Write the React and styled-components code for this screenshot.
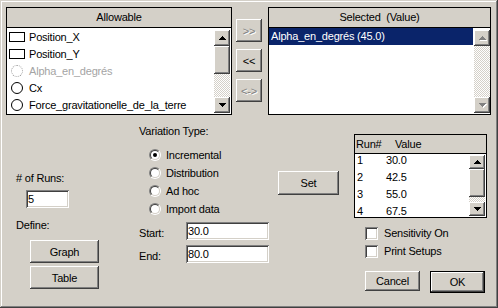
import React from 'react';
import styled, { createGlobalStyle, css } from 'styled-components';

const FACE = '#d4d0c8';
const SHADOW = '#808080';
const DARK = '#404040';
const HILITE = '#ffffff';
const NAVY = '#0a246a';

const GlobalStyle = createGlobalStyle`
  html, body {
    margin: 0;
    padding: 0;
    background: ${FACE};
  }
  body {
    font-family: "Liberation Sans", Arial, sans-serif;
    font-size: 11px;
    letter-spacing: -0.2px;
    color: #000;
  }
`;

const raised = css`
  box-shadow:
    inset -1px -1px ${DARK},
    inset 1px 1px ${HILITE},
    inset -2px -2px ${SHADOW},
    inset 2px 2px ${FACE};
`;

const sunken = css`
  box-shadow:
    inset 1px 1px ${SHADOW},
    inset -1px -1px ${HILITE},
    inset 2px 2px ${DARK},
    inset -2px -2px ${FACE};
`;

const Dialog = styled.div`
  box-sizing: border-box;
  width: 498px;
  height: 308px;
  padding: 7px 0 0 6px;
  background: ${FACE};
  box-shadow:
    inset -1px -1px ${DARK},
    inset 1px 1px ${FACE},
    inset -2px -2px ${SHADOW},
    inset 2px 2px ${HILITE};
  display: flex;
  flex-direction: column;
`;

const TopRow = styled.div`
  display: flex;
  align-items: flex-start;
`;

const Panel = styled.div`
  box-sizing: border-box;
  flex: none;
  display: flex;
  flex-direction: column;
  width: ${({ $w }) => $w}px;
  height: ${({ $h }) => $h}px;
  margin-left: ${({ $ml }) => $ml || 0}px;
  margin-top: ${({ $mt }) => $mt || 0}px;
  border: 1px solid #000;
  background: ${FACE};
`;

const PanelHeader = styled.div`
  flex: none;
  display: flex;
  justify-content: ${({ $left }) => ($left ? 'flex-start' : 'center')};
  height: ${({ $h }) => $h}px;
  line-height: ${({ $h }) => $h}px;
  border-bottom: 1px solid #000;
  padding-left: ${({ $left }) => ($left ? '1px' : 0)};
  white-space: pre;
`;

const PanelBody = styled.div`
  flex: 1;
  min-height: 0;
  display: flex;
  background: #fff;
`;

const Items = styled.div`
  flex: 1;
  min-width: 0;
  overflow: hidden;
`;

const ItemRow = styled.div`
  display: flex;
  align-items: center;
  gap: 4px;
  height: 17px;
  padding-left: 2px;
  white-space: nowrap;
  color: ${({ $disabled }) => ($disabled ? '#a4a4a4' : '#000')};
`;

const SelectedRow = styled.div`
  height: 17px;
  line-height: 17px;
  margin-right: 1px;
  padding-left: 2px;
  white-space: nowrap;
  background: ${({ $active }) => ($active ? NAVY : 'transparent')};
  color: ${({ $active }) => ($active ? '#fff' : '#000')};
`;

const IconSlot = styled.span`
  flex: none;
  width: 16px;
  height: 12px;
  display: flex;
  align-items: center;
  justify-content: center;
`;

const RectIcon = styled.span`
  box-sizing: border-box;
  width: 16px;
  height: 10px;
  border: 1px solid #000;
`;

const CircleIcon = styled.span`
  box-sizing: border-box;
  width: 12px;
  height: 12px;
  border-radius: 50%;
  border: 1px ${({ $dashed }) => ($dashed ? 'dotted #9a9a9a' : 'solid #000')};
`;

const Scroll = styled.div`
  flex: none;
  width: 16px;
  display: flex;
  flex-direction: column;
  margin: ${({ $top }) => $top}px ${({ $right }) => $right}px 1px 0;
`;

const ScrollButton = styled.div`
  box-sizing: border-box;
  flex: none;
  height: ${({ $h }) => $h}px;
  background: ${FACE};
  ${raised}
  display: flex;
  align-items: center;
  justify-content: center;
`;

const Track = styled.div`
  flex: 1;
  background: repeating-conic-gradient(${HILITE} 0% 25%, ${FACE} 0% 50%) 0 0 / 2px 2px;
`;

const UP = 'M3 0h1v1H3zM2 1h3v1H2zM1 2h5v1H1zM0 3h7v1H0z';
const DOWN = 'M0 0h7v1H0zM1 1h5v1H1zM2 2h3v1H2zM3 3h1v1H3z';

function Arrow({ dir, disabled }) {
  const d = dir === 'up' ? UP : DOWN;
  return (
    <svg width="8" height="5" viewBox="0 0 8 5" shapeRendering="crispEdges" style={{ marginLeft: 1 }}>
      {disabled && <path d={d} fill={HILITE} transform="translate(1 1)" />}
      <path d={d} fill={disabled ? SHADOW : '#000'} />
    </svg>
  );
}

function ScrollBar({ up = 16, down = 16, thumb = 0, top = 2, right = 1, disabled = false }) {
  return (
    <Scroll $top={top} $right={right}>
      <ScrollButton $h={up}><Arrow dir="up" disabled={disabled} /></ScrollButton>
      {thumb > 0 && <ScrollButton $h={thumb} />}
      <Track />
      <ScrollButton $h={down}><Arrow dir="down" disabled={disabled} /></ScrollButton>
    </Scroll>
  );
}

const MoveColumn = styled.div`
  flex: none;
  display: flex;
  flex-direction: column;
  gap: 7px;
  margin: 12px 0 0 4px;
`;

const Button = styled.div`
  box-sizing: border-box;
  flex: none;
  width: ${({ $w }) => $w}px;
  height: ${({ $h }) => $h}px;
  margin-left: ${({ $ml }) => $ml || 0}px;
  margin-top: ${({ $mt }) => $mt || 0}px;
  background: ${FACE};
  ${raised}
  display: flex;
  align-items: center;
  justify-content: center;
  white-space: nowrap;
  color: ${({ $disabled }) => ($disabled ? SHADOW : '#000')};
  text-shadow: ${({ $disabled }) => ($disabled ? `1px 1px 0 ${HILITE}` : 'none')};
`;

const DefaultButton = styled(Button)`
  border: 1px solid #000;
  box-shadow:
    inset -1px -1px ${DARK},
    inset 1px 1px ${HILITE},
    inset -2px -2px ${SHADOW};
`;

const Lower = styled.div`
  display: flex;
  align-items: flex-start;
`;

const Column = styled.div`
  flex: none;
  display: flex;
  flex-direction: column;
  align-items: flex-start;
  width: ${({ $w }) => $w}px;
  margin-left: ${({ $ml }) => $ml || 0}px;
`;

const Label = styled.div`
  line-height: 13px;
  white-space: nowrap;
  margin-top: ${({ $mt }) => $mt || 0}px;
`;

const Field = styled.input`
  box-sizing: border-box;
  width: ${({ $w }) => $w}px;
  height: 18px;
  margin: ${({ $mt }) => $mt || 0}px 0 0 ${({ $ml }) => $ml || 0}px;
  padding: 0 0 0 2px;
  border: none;
  outline: none;
  background: #fff;
  ${sunken}
  font: inherit;
  letter-spacing: inherit;
  color: #000;
`;

const RadioGroup = styled.div`
  display: flex;
  flex-direction: column;
  margin-top: 8px;
`;

const OptionRow = styled.div`
  display: flex;
  align-items: center;
  gap: ${({ $gap }) => $gap}px;
  height: 18px;
  padding-left: ${({ $pl }) => $pl}px;
  white-space: nowrap;
`;

const RadioOuter = styled.span`
  box-sizing: border-box;
  flex: none;
  width: 12px;
  height: 12px;
  border-radius: 50%;
  border: 1px solid;
  border-color: ${SHADOW} ${HILITE} ${HILITE} ${SHADOW};
  display: flex;
  align-items: center;
  justify-content: center;
`;

const RadioInner = styled.span`
  box-sizing: border-box;
  width: 10px;
  height: 10px;
  border-radius: 50%;
  border: 1px solid;
  border-color: ${DARK} ${FACE} ${FACE} ${DARK};
  background: #fff;
  display: flex;
  align-items: center;
  justify-content: center;

  &::after {
    content: '';
    width: 4px;
    height: 4px;
    border-radius: 50%;
    background: ${({ $checked }) => ($checked ? '#000' : 'transparent')};
  }
`;

const CheckBox = styled.span`
  box-sizing: border-box;
  flex: none;
  width: 13px;
  height: 13px;
  background: #fff;
  ${sunken}
`;

const CheckGroup = styled.div`
  margin-top: 6px;
`;

const FieldRow = styled.div`
  display: flex;
  align-items: center;
  margin-top: ${({ $mt }) => $mt}px;
`;

const FieldLabel = styled.span`
  width: 47px;
  padding-top: 3px;
`;

const RunRow = styled.div`
  display: flex;
  height: 17px;
  line-height: 13px;
  padding-left: 2px;
`;

const RunNo = styled.span`
  width: ${({ $w }) => $w}px;
`;

const ButtonRow = styled.div`
  display: flex;
  align-items: flex-start;
  gap: 10px;
  margin: 11px 0 0 11px;
`;

const allowable = [
  { name: 'Position_X', icon: 'rect' },
  { name: 'Position_Y', icon: 'rect' },
  { name: 'Alpha_en_degrés', icon: 'dashed', disabled: true },
  { name: 'Cx', icon: 'circle' },
  { name: 'Force_gravitationelle_de_la_terre', icon: 'circle' },
];

const variations = [
  { label: 'Incremental', checked: true },
  { label: 'Distribution' },
  { label: 'Ad hoc' },
  { label: 'Import data' },
];

const runs = [
  ['1', '30.0'],
  ['2', '42.5'],
  ['3', '55.0'],
  ['4', '67.5'],
];

function ItemIcon({ kind }) {
  return (
    <IconSlot>
      {kind === 'rect' ? <RectIcon /> : <CircleIcon $dashed={kind === 'dashed'} />}
    </IconSlot>
  );
}

export default function App() {
  return (
    <>
      <GlobalStyle />
      <Dialog>
        <TopRow>
          <Panel $w={226} $h={108}>
            <PanelHeader $h={19}>Allowable</PanelHeader>
            <PanelBody>
              <Items>
                {allowable.map((item) => (
                  <ItemRow key={item.name} $disabled={item.disabled}>
                    <ItemIcon kind={item.icon} />
                    {item.name}
                  </ItemRow>
                ))}
              </Items>
              <ScrollBar thumb={28} />
            </PanelBody>
          </Panel>

          <MoveColumn>
            <Button $w={26} $h={23} $disabled>&gt;&gt;</Button>
            <Button $w={26} $h={23}>&lt;&lt;</Button>
            <Button $w={26} $h={23} $disabled>&lt;-&gt;</Button>
          </MoveColumn>

          <Panel $w={223} $h={108} $ml={6}>
            <PanelHeader $h={19}>Selected  (Value)</PanelHeader>
            <PanelBody>
              <Items>
                <SelectedRow $active>Alpha_en_degrés (45.0)</SelectedRow>
              </Items>
              <ScrollBar disabled right={0} />
            </PanelBody>
          </Panel>
        </TopRow>

        <Lower>
          <Column $w={123} $ml={10}>
            <Label $mt={57}># of Runs:</Label>
            <Field $w={43} $mt={5} $ml={10} readOnly value="5" />
            <Label $mt={11}>Define:</Label>
            <Button $w={69} $h={23} $ml={14} $mt={8}>Graph</Button>
            <Button $w={69} $h={23} $ml={14} $mt={3}>Table</Button>
          </Column>

          <Column $w={139}>
            <Label $mt={10}>Variation Type:</Label>
            <RadioGroup>
              {variations.map((v) => (
                <OptionRow key={v.label} $pl={10} $gap={5}>
                  <RadioOuter>
                    <RadioInner $checked={v.checked} />
                  </RadioOuter>
                  {v.label}
                </OptionRow>
              ))}
            </RadioGroup>
            <FieldRow $mt={4}>
              <FieldLabel>Start:</FieldLabel>
              <Field $w={83} readOnly value="30.0" />
            </FieldRow>
            <FieldRow $mt={5}>
              <FieldLabel>End:</FieldLabel>
              <Field $w={83} readOnly value="80.0" />
            </FieldRow>
          </Column>

          <Column $w={76}>
            <Button $w={61} $h={24} $mt={56}>Set</Button>
          </Column>

          <Column $w={133}>
            <Panel $w={133} $h={84} $mt={19}>
              <PanelHeader $h={18} $left>
                <RunNo $w={39}>Run#</RunNo>
                Value
              </PanelHeader>
              <PanelBody>
                <Items>
                  {runs.map(([n, v]) => (
                    <RunRow key={n}>
                      <RunNo $w={29}>{n}</RunNo>
                      {v}
                    </RunRow>
                  ))}
                </Items>
                <ScrollBar up={14} down={14} thumb={28} top={1} />
              </PanelBody>
            </Panel>
            <CheckGroup>
              <OptionRow $pl={11} $gap={6}>
                <CheckBox />
                Sensitivity On
              </OptionRow>
              <OptionRow $pl={11} $gap={6}>
                <CheckBox />
                Print Setups
              </OptionRow>
            </CheckGroup>
            <ButtonRow>
              <Button $w={55} $h={20}>Cancel</Button>
              <DefaultButton $w={55} $h={22}>OK</DefaultButton>
            </ButtonRow>
          </Column>
        </Lower>
      </Dialog>
    </>
  );
}
